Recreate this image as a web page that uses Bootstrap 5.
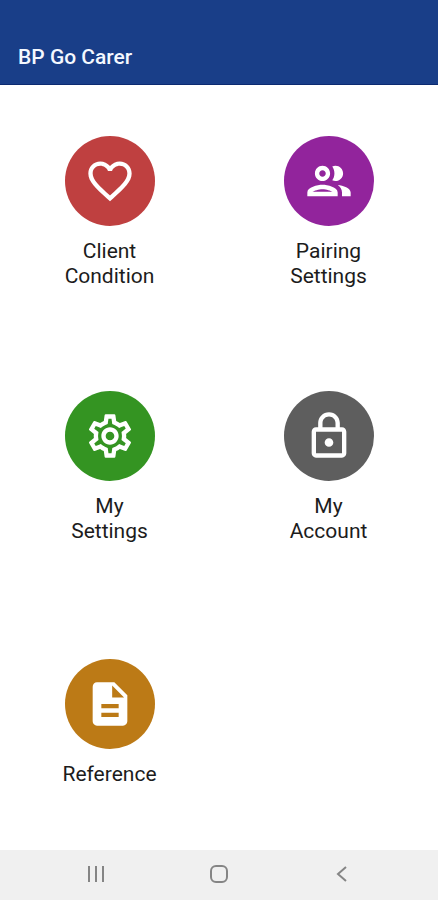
<!DOCTYPE html>
<html lang="en">
<head>
<meta charset="utf-8">
<meta name="viewport" content="width=device-width, initial-scale=1">
<title>BP Go Carer</title>
<link href="https://cdn.jsdelivr.net/npm/bootstrap@5.3.0/dist/css/bootstrap.min.css" rel="stylesheet">
<style>
body { font-family: Roboto, "Liberation Sans", sans-serif; color: #1c1c1c; }
.app-bar { background: #193e88; border-bottom: 1px solid #0c2a70; padding: 44px 18px 14px; }
.app-title { font-size: 21px; line-height: 26px; font-weight: 500; color: #f4f8ff; }
.tiles { grid-template-columns: 1fr 1fr; grid-auto-rows: 1fr; }
.tile { color: inherit; font-size: 21px; line-height: 25px; gap: 13px; }
.tile-label { max-width: 110px; }
.disc { width: 90px; height: 90px; color: #fff; }
.disc svg { width: 52px; height: 52px; fill: currentColor; }
.disc-red { background: #bf4040; }
.disc-purple { background: #92249c; }
.disc-green { background: #349422; }
.disc-gray { background: #5e5e5e; }
.disc-amber { background: #bc7a16; }
.sys-bar { background: #f0f0f0; height: 50px; padding: 0 35px 2px; }
.sys-bar svg { width: 24px; height: 24px; fill: none; stroke: #858585; stroke-width: 2; }
</style>
<script src="https://cdn.jsdelivr.net/npm/bootstrap@5.3.0/dist/js/bootstrap.bundle.min.js"></script>
</head>
<body class="d-flex flex-column min-vh-100 bg-white">
<header class="app-bar"><h1 class="app-title m-0">BP Go Carer</h1></header>
<main class="tiles d-grid flex-grow-1 text-center">
  <a href="#condition" class="tile d-flex flex-column align-items-center justify-content-center text-decoration-none">
    <span class="disc disc-red rounded-circle d-flex align-items-center justify-content-center"><svg viewBox="0 0 24 24" aria-hidden="true"><path d="M16.5 3c-1.74 0-3.41.81-4.5 2.09C10.91 3.81 9.24 3 7.5 3 4.42 3 2 5.42 2 8.5c0 3.78 3.4 6.86 8.55 11.54L12 21.35l1.45-1.32C18.6 15.36 22 12.28 22 8.5 22 5.42 19.58 3 16.5 3zm-4.4 15.55l-.1.1-.1-.1C7.14 14.24 4 11.39 4 8.5 4 6.5 5.500 5 7.500 5c1.540 0 3.040.990 3.570 2.360h1.870C13.460 5.990 14.960 5 16.500 5c2 0 3.500 1.500 3.500 3.500 0 2.890-3.140 5.740-7.900 10.050z"/></svg></span>
    <span class="tile-label">Client<br>Condition</span>
  </a>
  <a href="#pairing" class="tile d-flex flex-column align-items-center justify-content-center text-decoration-none">
    <span class="disc disc-purple rounded-circle d-flex align-items-center justify-content-center"><svg viewBox="0 0 24 24" aria-hidden="true"><path d="M9 13.75c-2.34 0-7 1.17-7 3.5V19h14v-1.75c0-2.33-4.66-3.5-7-3.5zM4.34 17c.84-.58 2.87-1.25 4.66-1.25s3.82.67 4.66 1.25H4.34zM9 12c1.93 0 3.5-1.57 3.5-3.5S10.93 5 9 5 5.5 6.57 5.5 8.5 7.07 12 9 12zm0-5c.83 0 1.5.67 1.5 1.5S9.83 10 9 10s-1.5-.67-1.5-1.5S8.17 7 9 7zm7.04 6.81c1.16.84 1.96 1.96 1.96 3.44V19h4v-1.75c0-2.02-3.5-3.17-5.96-3.44zM15 12c1.93 0 3.5-1.57 3.5-3.5S16.93 5 15 5c-.54 0-1.04.13-1.5.35.63.89 1 1.98 1 3.15s-.37 2.26-1 3.15c.46.22.96.35 1.5.35z"/></svg></span>
    <span class="tile-label">Pairing<br>Settings</span>
  </a>
  <a href="#settings" class="tile d-flex flex-column align-items-center justify-content-center text-decoration-none">
    <span class="disc disc-green rounded-circle d-flex align-items-center justify-content-center"><svg viewBox="0 0 24 24" aria-hidden="true"><path d="M19.43 12.98c.04-.32.07-.64.07-.98 0-.34-.03-.66-.07-.98l2.11-1.65c.19-.15.24-.42.12-.64l-2-3.46c-.09-.16-.26-.25-.44-.25-.06 0-.12.01-.17.03l-2.49 1c-.52-.4-1.08-.73-1.69-.98l-.38-2.65C14.46 2.18 14.25 2 14 2h-4c-.25 0-.46.18-.49.42l-.38 2.65c-.61.25-1.17.59-1.69.98l-2.49-1c-.06-.02-.12-.03-.18-.03-.17 0-.34.09-.43.25l-2 3.46c-.13.22-.07.49.12.64l2.11 1.65c-.04.32-.07.65-.07.98 0 .33.03.66.07.98l-2.11 1.65c-.19.15-.24.42-.12.64l2 3.46c.09.16.26.25.44.25.06 0 .12-.01.17-.03l2.49-1c.52.4 1.08.73 1.69.98l.38 2.65c.03.24.24.42.49.42h4c.25 0 .46-.18.49-.42l.38-2.65c.61-.25 1.17-.59 1.69-.98l2.49 1c.06.02.12.03.18.03.17 0 .34-.09.43-.25l2-3.46c.12-.22.07-.49-.12-.64l-2.11-1.65zm-1.98-1.71c.04.31.05.52.05.73 0 .21-.02.43-.05.73l-.14 1.13.89.7 1.08.84-.7 1.21-1.27-.51-1.04-.42-.9.68c-.43.32-.84.56-1.25.73l-1.06.43-.16 1.13-.2 1.35h-1.4l-.19-1.35-.16-1.13-1.06-.43c-.43-.18-.83-.41-1.23-.71l-.91-.7-1.06.43-1.27.51-.7-1.21 1.08-.84.89-.7-.14-1.13c-.03-.31-.05-.54-.05-.74s.02-.43.05-.73l.14-1.13-.89-.7-1.08-.84.7-1.21 1.27.51 1.04.42.9-.68c.43-.32.84-.56 1.25-.73l1.06-.43.16-1.13.2-1.35h1.39l.19 1.35.16 1.13 1.06.43c.43.18.83.41 1.23.71l.91.7 1.06-.43 1.27-.51.7 1.21-1.07.85-.89.7.14 1.13zM12 8c-2.21 0-4 1.79-4 4s1.79 4 4 4 4-1.79 4-4-1.79-4-4-4zm0 6c-1.1 0-2-.9-2-2s.9-2 2-2 2 .9 2 2-.9 2-2 2z"/></svg></span>
    <span class="tile-label">My<br>Settings</span>
  </a>
  <a href="#account" class="tile d-flex flex-column align-items-center justify-content-center text-decoration-none">
    <span class="disc disc-gray rounded-circle d-flex align-items-center justify-content-center"><svg viewBox="0 0 24 24" aria-hidden="true"><path d="M18 8h-1V6c0-2.76-2.24-5-5-5S7 3.24 7 6v2H6c-1.1 0-2 .9-2 2v10c0 1.1.9 2 2 2h12c1.1 0 2-.9 2-2V10c0-1.1-.9-2-2-2zM9 6c0-1.66 1.34-3 3-3s3 1.34 3 3v2H9V6zm9 14H6V10h12v10zm-6-3c1.1 0 2-.9 2-2s-.9-2-2-2-2 .9-2 2 .9 2 2 2z"/></svg></span>
    <span class="tile-label">My<br>Account</span>
  </a>
  <a href="#reference" class="tile d-flex flex-column align-items-center justify-content-center text-decoration-none">
    <span class="disc disc-amber rounded-circle d-flex align-items-center justify-content-center"><svg viewBox="0 0 24 24" aria-hidden="true"><path d="M14 2H6c-1.1 0-1.99.9-1.99 2L4 20c0 1.1.89 2 1.99 2H18c1.1 0 2-.9 2-2V8l-6-6zm2 16H8v-2h8v2zm0-4H8v-2h8v2zm-3-5V3.5L18.5 9H13z"/></svg></span>
    <span class="tile-label">Reference</span>
  </a>
</main>
<nav class="sys-bar d-flex justify-content-around align-items-center" aria-label="System">
  <button type="button" class="btn p-0 border-0 d-flex" aria-label="Recent apps"><svg viewBox="0 0 24 24"><path d="M5 4v16M12 4v16M19 4v16"/></svg></button>
  <button type="button" class="btn p-0 border-0 d-flex" aria-label="Home"><svg viewBox="0 0 24 24"><rect x="4" y="4" width="16" height="16" rx="5"/></svg></button>
  <button type="button" class="btn p-0 border-0 d-flex" aria-label="Back"><svg viewBox="0 0 24 24"><path d="M16 5l-8 7 8 7"/></svg></button>
</nav>
</body>
</html>
